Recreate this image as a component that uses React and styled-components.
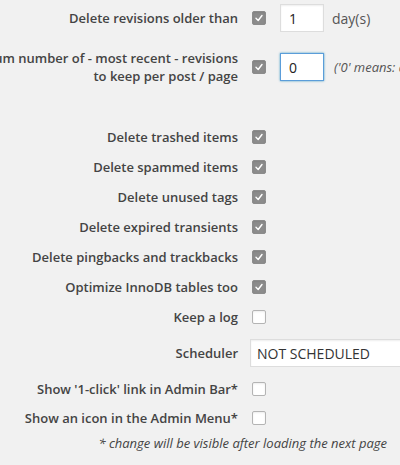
import React from "react";
import styled, { createGlobalStyle } from "styled-components";

const Global = createGlobalStyle`
  html, body { margin: 0; padding: 0; background: #f1f1f1; overflow: hidden; }
  body { font-family: "Open Sans", "Liberation Sans", sans-serif; font-size: 13px; color: #444; }
`;

const Page = styled.div`
  width: 400px;
  height: 465px;
  display: flex;
  flex-direction: column;
  overflow: hidden;
`;

const Row = styled.div`
  display: grid;
  grid-template-columns: 238px 1fr;
  column-gap: 12px;
  align-items: center;
  height: ${(p) => p.$h}px;
  flex: none;
`;

const Spacer = styled.div`
  height: ${(p) => p.$h}px;
  flex: none;
`;

const Label = styled.div`
  display: flex;
  justify-content: flex-end;
  min-width: 0;
`;

const LabelText = styled.span`
  white-space: nowrap;
  text-align: right;
  font-weight: 600;
  line-height: 18px;
  color: #444;
`;

const Control = styled.div`
  display: flex;
  align-items: center;
  gap: 14px;
  white-space: nowrap;
  min-width: 0;
`;

const Box = styled.span`
  box-sizing: border-box;
  width: 14px;
  height: 14px;
  margin-left: 2px;
  border-radius: 2px;
  flex: none;
  display: inline-flex;
  align-items: center;
  justify-content: center;
  background: ${(p) => (p.$checked ? "#8c8c8c" : "#fff")};
  border: 1px solid ${(p) => (p.$checked ? "#8c8c8c" : "#b4b4b4")};
  box-shadow: inset 0 1px 2px rgba(0,0,0,0.08);
`;

const NumInput = styled.div`
  box-sizing: border-box;
  flex: none;
  width: 44px;
  height: 28px;
  background: #fff;
  border: 1px solid ${(p) => (p.$focus ? "#5b9dd9" : "#ddd")};
  box-shadow: ${(p) => (p.$focus ? "0 0 2px rgba(30,140,190,0.8)" : "inset 0 1px 2px rgba(0,0,0,0.07)")};
  display: flex;
  align-items: center;
  padding-left: 8px;
  font-size: 14px;
  color: #222;
`;

const After = styled.span`
  flex: none;
  margin-left: ${(p) => (p.$italic ? "-4px" : "-6px")};
  color: #555;
  font-style: ${(p) => (p.$italic ? "italic" : "normal")};
  font-size: ${(p) => (p.$italic ? "13px" : "14px")};
`;

const Select = styled.div`
  box-sizing: border-box;
  flex: none;
  width: 200px;
  height: 28px;
  background: #fff;
  border: 1px solid #ddd;
  box-shadow: inset 0 1px 2px rgba(0,0,0,0.07);
  display: flex;
  align-items: center;
  padding-left: 6px;
  font-size: 14px;
  color: #333;
`;

const Note = styled.div`
  height: 22px;
  display: flex;
  align-items: center;
  justify-content: flex-end;
  padding-right: 13px;
  font-style: italic;
  color: #444;
  flex: none;
`;

const Check = ({ checked }) => (
  <Box $checked={checked}>
    {checked && (
      <svg width="10" height="10" viewBox="0 0 10 10">
        <polyline points="2,5.3 4.2,7.5 8,2.5" fill="none" stroke="#fff" strokeWidth="1.4" strokeLinecap="round" strokeLinejoin="round" />
      </svg>
    )}
  </Box>
);

const checkRows = [
  ["Delete trashed items", true],
  ["Delete spammed items", true],
  ["Delete unused tags", true],
  ["Delete expired transients", true],
  ["Delete pingbacks and trackbacks", true],
  ["Optimize InnoDB tables too", true],
  ["Keep a log", false],
];

export default function App() {
  return (
    <Page>
      <Global />
      <Row $h={36}>
        <Label><LabelText>Delete revisions older than</LabelText></Label>
        <Control>
          <Check checked />
          <NumInput>1</NumInput>
          <After>day(s)</After>
        </Control>
      </Row>
      <Row $h={62}>
        <Label>
          <LabelText>
            Maximum number of - most recent - revisions
            <br />
            to keep per post / page
          </LabelText>
        </Label>
        <Control>
          <Check checked />
          <NumInput $focus>0</NumInput>
          <After $italic>('0' means: all revisions will be kept)</After>
        </Control>
      </Row>
      <Spacer $h={24} />
      {checkRows.map(([label, checked]) => (
        <Row $h={30} key={label}>
          <Label><LabelText>{label}</LabelText></Label>
          <Control><Check checked={checked} /></Control>
        </Row>
      ))}
      <Row $h={42}>
        <Label><LabelText>Scheduler</LabelText></Label>
        <Control><Select>NOT SCHEDULED</Select></Control>
      </Row>
      <Row $h={30}>
        <Label><LabelText>Show '1-click' link in Admin Bar*</LabelText></Label>
        <Control><Check /></Control>
      </Row>
      <Row $h={28}>
        <Label><LabelText>Show an icon in the Admin Menu*</LabelText></Label>
        <Control><Check /></Control>
      </Row>
      <Note>* change will be visible after loading the next page</Note>
    </Page>
  );
}
